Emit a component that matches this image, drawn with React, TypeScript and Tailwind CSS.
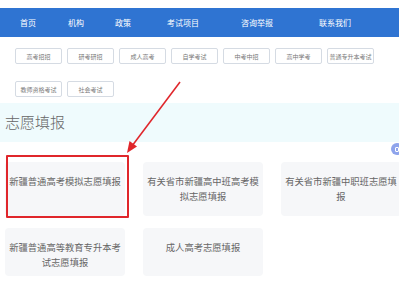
import React from 'react'

const navItems: { label: string; w: string }[] = [
  { label: '首页', w: 'w-[56px]' },
  { label: '机构', w: 'w-[40px]' },
  { label: '政策', w: 'w-[54px]' },
  { label: '考试项目', w: 'w-[66px]' },
  { label: '咨询举报', w: 'w-[82px]' },
  { label: '联系我们', w: 'w-[74px]' },
]

const tagRow1 = ['高考招招', '研考研招', '成人高考', '自学考试', '中考中招', '高中学考', '普通专升本考试']
const tagRow2 = ['教师资格考试', '社会考试']

const cards = [
  '新疆普通高考模拟志愿填报',
  '有关省市新疆高中班高考模拟志愿填报',
  '有关省市新疆中职班志愿填报',
  '新疆普通高等教育专升本考试志愿填报',
  '成人高考志愿填报',
]

function Tag({ label }: { label: string }) {
  return (
    <div className="w-[47px] h-[16px] flex items-center justify-center border border-[#d5dbe3] rounded-[2px] bg-white text-[6px] text-[#777] whitespace-nowrap">
      {label}
    </div>
  )
}

export default function App() {
  return (
    <div className="relative w-[399px] h-[300px] overflow-hidden bg-white" style={{ fontFamily: '"Noto Sans CJK SC", "Noto Sans", sans-serif' }}>
      <div className="pt-[8px]">
        <div className="h-[29px] bg-[#2f74d2] flex items-center">
          {navItems.map(n => (
            <div key={n.label} className={`${n.w} text-center text-white text-[8px]`}>{n.label}</div>
          ))}
        </div>
      </div>

      <div className="pl-[15px] pt-[11px]">
        <div className="flex gap-[5px]">
          {tagRow1.map(t => <Tag key={t} label={t} />)}
        </div>
        <div className="flex gap-[5px] mt-[17px]">
          {tagRow2.map(t => <Tag key={t} label={t} />)}
        </div>
      </div>

      <div className="mt-[6px] h-[39px] bg-[#effbfd] flex items-center pl-[5px]">
        <span className="text-[15px] font-extralight text-[#666]">志愿填报</span>
      </div>

      <div className="grid grid-cols-[120px_120px_120px] gap-x-[18px] gap-y-[12px] pl-[5px] mt-[20px]">
        {cards.map((c, i) => (
          <div key={c} className={`relative ${i < 3 ? 'h-[54px]' : 'h-[48px]'} bg-[#f6f7f9] rounded-[4px] px-[2px] pt-[12px] text-center text-[9.3px] leading-[15px] text-[#666]`}>
            {c}
            {i === 0 && (
              <div className="absolute left-[1px] -right-[4px] -top-[7px] -bottom-[2px] border-2 border-[#e0262b] rounded-[1px]" />
            )}
          </div>
        ))}
      </div>

      <div className="absolute left-[391px] top-[143px] w-[12px] h-[12px] rounded-full bg-[#8ea4ec] flex items-center justify-center">
        <div className="w-[4px] h-[5px] border border-white rounded-[1px]" />
      </div>

      <svg className="absolute left-0 top-0 pointer-events-none" width="399" height="300">
        <line x1="180" y1="82" x2="132" y2="146" stroke="#e0262b" strokeWidth="1.6" />
        <polygon points="127,153 129.5,141 137,146.5" fill="#e0262b" />
      </svg>
    </div>
  )
}
